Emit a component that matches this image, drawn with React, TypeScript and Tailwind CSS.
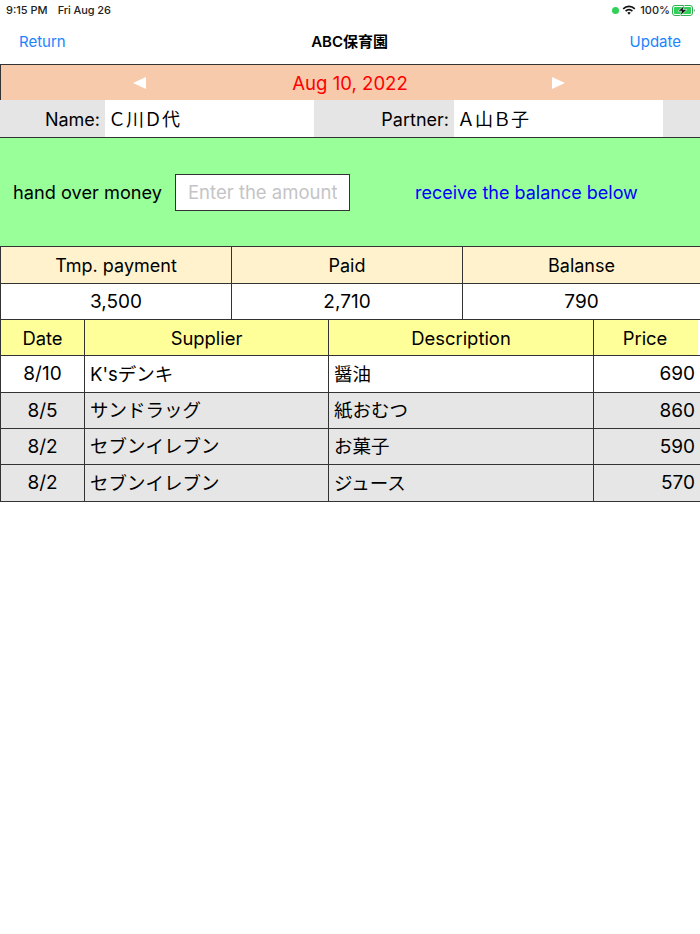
import React from 'react';

const font = { fontFamily: 'Inter, "Noto Sans CJK JP", sans-serif' };

const summary = [
  { label: 'Tmp. payment', value: '3,500' },
  { label: 'Paid', value: '2,710' },
  { label: 'Balanse', value: '790' },
];

const rows = [
  { date: '8/10', supplier: "K'sデンキ", description: '醤油', price: '690', bg: 'bg-white', h: 'h-[37px]' },
  { date: '8/5', supplier: 'サンドラッグ', description: '紙おむつ', price: '860', bg: 'bg-[#e6e6e6]', h: 'h-[36px]' },
  { date: '8/2', supplier: 'セブンイレブン', description: 'お菓子', price: '590', bg: 'bg-[#e6e6e6]', h: 'h-[36px]' },
  { date: '8/2', supplier: 'セブンイレブン', description: 'ジュース', price: '570', bg: 'bg-[#e6e6e6]', h: 'h-[37px]' },
];

function StatusBar() {
  return (
    <div className="h-[20px] flex items-center justify-between pl-[6px] pr-[4px] text-[11px] font-medium text-[#222]">
      <div className="flex gap-[10px]">
        <span>9:15 PM</span>
        <span className="tracking-[-0.1px]">Fri Aug 26</span>
      </div>
      <div className="flex items-center">
        <span className="w-[7px] h-[7px] rounded-full bg-[#30d158] mr-[3px]" />
        <svg width="14" height="10" viewBox="0 0 14 10" className="mr-[4px]">
          <path d="M0.6 3.2 A9 9 0 0 1 13.4 3.2 L12.2 4.5 A7.3 7.3 0 0 0 1.8 4.5 Z" fill="#111" />
          <path d="M3 5.5 A5.6 5.6 0 0 1 11 5.5 L9.8 6.8 A4 4 0 0 0 4.2 6.8 Z" fill="#111" />
          <path d="M5.3 7.8 A2.4 2.4 0 0 1 8.7 7.8 L7 9.7 Z" fill="#111" />
        </svg>
        <span className="mr-[2px]">100%</span>
        <svg width="24" height="11" viewBox="0 0 24 11">
          <rect x="0.5" y="0.5" width="20" height="10" rx="2.5" fill="none" stroke="#30b04f" />
          <rect x="2" y="2" width="17" height="7" rx="1" fill="#30d158" />
          <path d="M21.8 3.8 a2 2 0 0 1 0 3.4 Z" fill="#888" />
          <path d="M12.5 0.2 L6 6.2 H9.6 L8.2 10.8 L15 4.6 H11 Z" fill="#111" stroke="#fff" strokeWidth="0.6" />
        </svg>
      </div>
    </div>
  );
}

function NavBar() {
  return (
    <div className="h-[44px] flex items-center justify-between pl-[19px] pr-[19px]">
      <span className="text-[15px] text-[#1a84ff]">Return</span>
      <span className="text-[15px] font-semibold text-black pl-[4px]">ABC保育園</span>
      <span className="text-[15px] text-[#1a84ff]">Update</span>
    </div>
  );
}

function DateRow() {
  return (
    <div className="h-[36px] bg-[#f7caac] border-t border-l border-[#333] grid grid-cols-[1fr_auto_1fr] items-center text-[18.6px] leading-none text-[#ff0000]">
      <div className="flex justify-end pr-[147px]">
        <svg width="13" height="12" viewBox="0 0 13 12"><path d="M0 6 L13 0 V12 Z" fill="#fff" /></svg>
      </div>
      <span className="pt-[1px] -ml-[1px]">Aug 10, 2022</span>
      <div className="pl-[144px]">
        <svg width="13" height="12" viewBox="0 0 13 12"><path d="M13 6 L0 0 V12 Z" fill="#fff" /></svg>
      </div>
    </div>
  );
}

function NameRow() {
  return (
    <div className="h-[38px] bg-[#e5e5e5] border-b border-[#333] grid grid-cols-[105px_209px_140px_209px_37px] text-[18px] text-black">
      <div className="flex items-center justify-end pr-[5px] pt-[1px]">Name:</div>
      <div className="bg-white flex items-center pl-[3px] pt-[1px]">Ｃ川Ｄ代</div>
      <div className="flex items-center justify-end pr-[5px] pt-[1px]">Partner:</div>
      <div className="bg-white flex items-center pl-[3px] pt-[1px]">Ａ山Ｂ子</div>
      <div />
    </div>
  );
}

function PaymentRow() {
  return (
    <div className="h-[108px] bg-[#99ff99] flex items-center text-[18px]">
      <span className="ml-[13px] w-[149px] pt-[1px] text-[18.2px] text-black whitespace-nowrap">hand over money</span>
      <input
        readOnly
        placeholder="Enter the amount"
        className="ml-[13px] w-[175px] h-[37px] bg-white border border-[#333] px-[12px] text-[18.5px] placeholder:text-[#c4c4c6] outline-none"
      />
      <span className="ml-[65px] pt-[1px] text-[#0000ff]">receive the balance below</span>
    </div>
  );
}

function SummaryTable() {
  return (
    <div className="border-t border-[#333] text-[18px] text-black">
      <div className="grid grid-cols-[232px_231px_237px] h-[37px] bg-[#fff2cc] border-b border-[#333]">
        {summary.map((s, i) => (
          <div key={s.label} className={`flex items-center justify-center border-r border-[#333] ${i === 0 ? 'border-l' : ''} ${i === 2 ? 'border-r-0' : ''}`}>
            {s.label}
          </div>
        ))}
      </div>
      <div className="grid grid-cols-[232px_231px_237px] h-[36px] bg-white border-b border-[#333] text-[19px]">
        {summary.map((s, i) => (
          <div key={s.label} className={`flex items-center justify-center pt-[2px] border-r border-[#333] ${i === 0 ? 'border-l' : ''} ${i === 2 ? 'border-r-0' : ''}`}>
            {s.value}
          </div>
        ))}
      </div>
    </div>
  );
}

function DetailTable() {
  const cols = 'grid grid-cols-[85px_244px_265px_106px]';
  return (
    <div className="text-[18.4px] text-black">
      <div className={`${cols} h-[36px] border-b border-[#333]`}>
        <div className="bg-[#ffff99] border-l border-r border-[#333] flex items-center justify-center pt-[2px]">Date</div>
        <div className="bg-[#ffff99] border-r border-[#333] flex items-center justify-center pt-[2px]">Supplier</div>
        <div className="bg-[#ffff99] border-r border-[#333] flex items-center justify-center pt-[2px]">Description</div>
        <div className="bg-[#ffff99] mr-[2px] flex items-center justify-center pr-[2px] pt-[2px]">Price</div>
      </div>
      {rows.map((r, i) => (
        <div key={i} className={`${cols} ${r.h} ${r.bg} border-b border-[#333]`}>
          <div className="border-l border-r border-[#333] flex items-center justify-center pt-[1px] text-[19px]">{r.date}</div>
          <div className="border-r border-[#333] flex items-center pl-[5px] pt-[1px] text-[18.5px]">{r.supplier}</div>
          <div className="border-r border-[#333] flex items-center pl-[5px] pt-[1px] text-[18.5px]">{r.description}</div>
          <div className="flex items-center justify-end pr-[5px] pt-[1px] text-[19px]">{r.price}</div>
        </div>
      ))}
    </div>
  );
}

export default function App() {
  return (
    <div className="relative w-[700px] h-[934px] bg-white overflow-hidden" style={font}>
      <StatusBar />
      <NavBar />
      <DateRow />
      <NameRow />
      <PaymentRow />
      <SummaryTable />
      <DetailTable />
    </div>
  );
}
